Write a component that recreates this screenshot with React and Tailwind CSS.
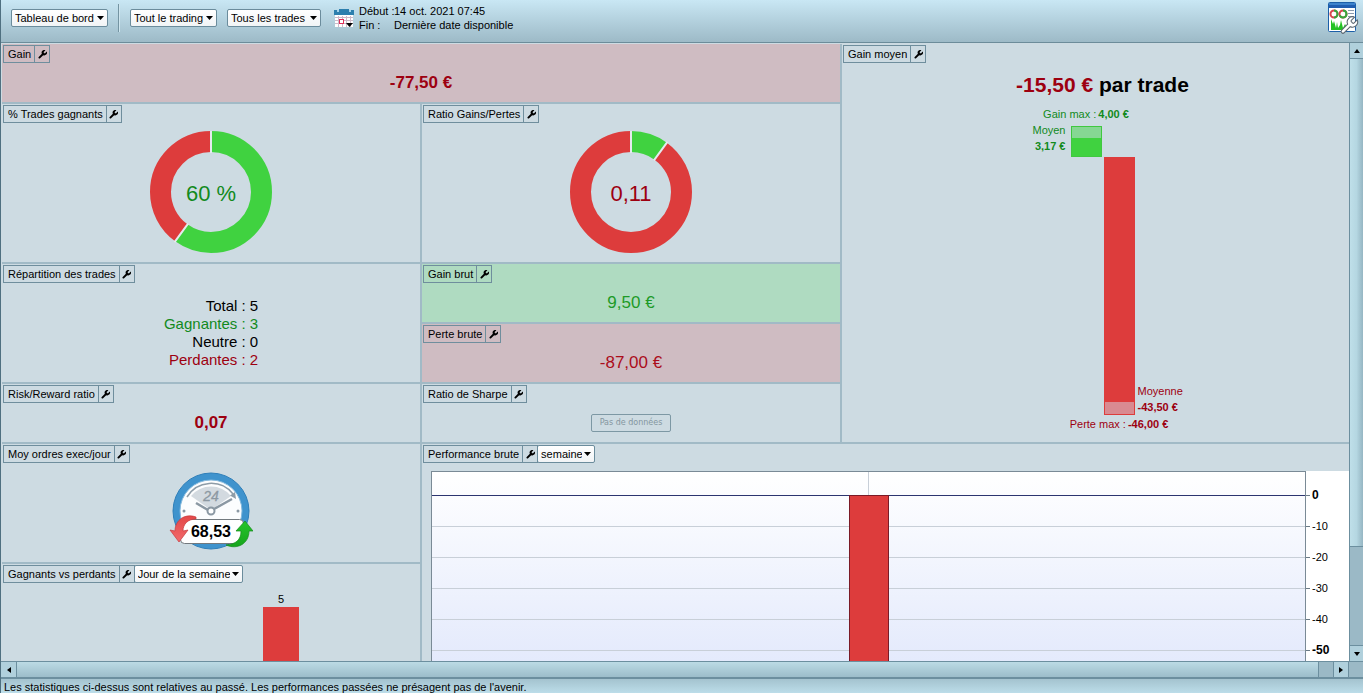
import React from 'react';

const AXIS_TICKS = [-10, -20, -30, -40];

const WRENCH_PATH =
  'M14.7 6.3a1 1 0 0 0 0 1.4l1.6 1.6a1 1 0 0 0 1.4 0l3.77-3.77a6 6 0 0 1-7.94 7.94l-6.91 6.91a2.12 2.12 0 0 1-3-3l6.91-6.91a6 6 0 0 1 7.94-7.94l-3.76 3.76z';

const WrenchIcon = () => (
  <svg width="9" height="9" viewBox="2 2 20 20" aria-hidden="true">
    <path d={WRENCH_PATH} fill="currentColor" />
  </svg>
);

// Select with a small solid caret, used in the toolbar and in the widget headers
const Dropdown = ({ label, options, className = '' }) => (
  <div className={`relative flex h-[18px] ${className}`}>
    <select
      aria-label={label}
      className="h-full w-full appearance-none rounded-xs border border-[#6b8c9c] bg-linear-to-b from-white to-[#f1f4f6] pl-[3px] pr-3 text-[11px] leading-4 text-black"
    >
      {options.map((option) => (
        <option key={option}>{option}</option>
      ))}
    </select>
    <svg
      className="pointer-events-none absolute right-1 top-[7px]"
      width="7"
      height="4"
      viewBox="0 0 7 4"
      aria-hidden="true"
    >
      <path d="M0 0 H7 L3.5 4 Z" fill="#000" />
    </svg>
  </div>
);

const Widget = ({ title, tone = 'bg-[#cddbe2]', border = 'border-b-2 border-r-2', className = '', extra, children }) => (
  <section className={`flex min-h-0 min-w-0 flex-col border-[#a1bac6] ${tone} ${border} ${className}`}>
    <div className="flex pl-px pt-px">
      <h2 className="h-[18px] whitespace-nowrap border border-[#6f8e9d] pl-1 pr-[3px] text-[11px] leading-4">{title}</h2>
      <button
        aria-label={`Configurer ${title}`}
        className="flex h-[18px] w-[15px] items-center justify-center border-y border-r border-[#6f8e9d]"
      >
        <WrenchIcon />
      </button>
      {extra}
    </div>
    {children}
  </section>
);

const Donut = ({ percent, label, className }) => {
  const angle = (percent / 100) * 2 * Math.PI;
  const sin = Math.sin(angle);
  const cos = Math.cos(angle);
  return (
    <svg className="mx-auto mt-2 shrink-0" width="122" height="122" viewBox="0 0 122 122">
      <g fill="none" strokeWidth="21" transform="rotate(-90 61 61)">
        <circle
          cx="61"
          cy="61"
          r="50.5"
          stroke="#dd3c3c"
          pathLength="100"
          strokeDasharray={`${100 - percent} 100`}
          strokeDashoffset={-percent}
        />
        <circle cx="61" cy="61" r="50.5" stroke="#40d240" pathLength="100" strokeDasharray={`${percent} 100`} />
      </g>
      <path
        d={`M61 0 V22 M${61 + sin * 39} ${61 - cos * 39} L${61 + sin * 62} ${61 - cos * 62}`}
        stroke="#e4eaee"
        strokeWidth="2"
      />
      <text x="61" y="70" textAnchor="middle" fontSize="22" className={className}>
        {label}
      </text>
    </svg>
  );
};

const CalendarIcon = () => (
  <svg width="20" height="20" viewBox="0 0 20 20" aria-hidden="true">
    <path d="M0 1 H3 V2 H5 V0 H15 V2 H17 V1 H20 V6 H0 Z" fill="#2c7fae" />
    <path d="M3 1 H5 V3 H3 Z M15 1 H17 V3 H15 Z" fill="#a5d3ea" />
    <rect x="1" y="6" width="18" height="12" fill="#fff" />
    <path
      d="M1 8.5 H19 M1 11.5 H19 M1 14.5 H19 M4.5 7 V18 M8.5 7 V18 M12.5 7 V18 M16.5 7 V18"
      stroke="#cdb9c8"
    />
    <rect x="5.5" y="10.5" width="4" height="4" fill="#fff" stroke="#e0305a" />
    <path d="M12 14 H19 L15.5 18 Z" fill="#000" />
  </svg>
);

const DashboardIcon = () => (
  <svg width="32" height="34" viewBox="0 0 32 34" aria-hidden="true">
    <rect x="0.5" y="0.5" width="27" height="29" rx="1" fill="#fff" stroke="#1c5fa8" />
    <rect x="1" y="1" width="26" height="5" fill="#1f5db0" />
    <rect x="1" y="1" width="26" height="2" fill="#3b82cc" />
    <g fill="none" strokeWidth="2">
      <circle cx="6" cy="12" r="3.5" stroke="#d8454c" />
      <circle cx="15" cy="12" r="3.5" stroke="#d8454c" />
      <path d="M6 8.5 A3.5 3.5 0 0 1 6 15.5" stroke="#35a83c" />
      <path d="M15 8.5 A3.5 3.5 0 1 1 11.8 13.5" stroke="#35a83c" />
    </g>
    <path d="M20 8.5 H26 M20 11.5 H26 M20 14.5 H26" stroke="#8a99ac" />
    <path
      d="M3 28 V17 L5 22 L6 19 L8 26 L9 20 L10 26 L12 23 L13 18 L15 26 L17 22 L20 27 V28 Z"
      fill="#23c223"
    />
    <path d={WRENCH_PATH} transform="translate(10.5 13) scale(0.87)" fill="#fff" stroke="#5a6670" strokeWidth="1.2" />
  </svg>
);

const ClockGauge = ({ value }) => (
  <svg className="mx-auto mt-[9px] shrink-0" width="84" height="78" viewBox="0 0 84 78">
    <defs>
      <linearGradient id="down" x1="0" y1="0" x2="0" y2="1">
        <stop offset="0" stopColor="#e34848" />
        <stop offset="1" stopColor="#f26a6c" />
      </linearGradient>
      <linearGradient id="up" x1="0" y1="0" x2="0" y2="1">
        <stop offset="0" stopColor="#25c52b" />
        <stop offset="1" stopColor="#16a51c" />
      </linearGradient>
    </defs>
    <circle cx="42" cy="39" r="38" fill="#3f93cd" stroke="#2f7fb9" />
    <circle cx="42" cy="39" r="31" fill="#fcfdfe" stroke="#84b8dc" />
    <path d="M22 24 A26 26 0 0 1 62 24 L42 38 Z" fill="#d3dae0" />
    <path d="M18 25 A28 28 0 0 1 64 22" fill="none" stroke="#8e9ca7" strokeWidth="1.5" />
    <path d="M67 27 L61 23.5 L66 20 Z" fill="#8e9ca7" />
    <text x="42" y="29" textAnchor="middle" fontSize="14" fontStyle="italic" fill="#8c98a2" stroke="#8c98a2" strokeWidth="0.3">
      24
    </text>
    <path d="M27 31 L39 38 M45 37 L63 27" stroke="#8b98a3" strokeWidth="2.5" />
    <circle cx="42" cy="39" r="3.5" fill="#fff" stroke="#8b98a3" strokeWidth="2" />
    <circle cx="15" cy="39" r="1.5" fill="#8b98a3" />
    <circle cx="69" cy="39" r="1.5" fill="#8b98a3" />
    <rect x="11.5" y="47.5" width="63" height="24" rx="4" fill="#fff" stroke="#72797e" />
    <path
      d="M27 45 C16 41 6 48 6 59 L1 58 L10 70 L19 58 L14 59 C14 52 19 47 27 47 Z"
      fill="url(#down)"
      stroke="#c73a3e"
      strokeWidth="0.7"
    />
    <path
      d="M57 73 C68 78 80 72 80 59 L84 59 L76 49 L67 59 L72 59 C72 68 67 72 57 73 Z"
      fill="url(#up)"
      stroke="#128b18"
      strokeWidth="0.7"
    />
    <text x="42" y="65" textAnchor="middle" fontSize="16" fontWeight="bold" fill="#000">
      {value}
    </text>
  </svg>
);

const ScrollButton = ({ label, path, className }) => (
  <button
    aria-label={label}
    className={`flex shrink-0 items-center justify-center border-[#6c8f9f] bg-[#b0d0dc] ${className}`}
  >
    <svg width="6" height="6" viewBox="0 0 6 6" aria-hidden="true">
      <path d={path} fill="#000" />
    </svg>
  </button>
);

const Toolbar = () => (
  <header className="flex h-[43px] shrink-0 items-start border-b border-[#6c8c9a] bg-linear-to-b from-[#c9e7f4] to-[#9dbac7]">
    <div className="flex pl-2.5 pt-[9px]">
      <Dropdown label="Vue" options={['Tableau de bord']} className="w-[97px]" />
    </div>
    <div className="ml-2.5 mt-1 h-7 w-0.5 border-l border-r border-l-[#7494a2] border-r-[#cfe6ef]" />
    <div className="flex gap-2.5 pl-2.5 pt-[9px]">
      <Dropdown label="Type de trading" options={['Tout le trading']} className="w-[87px]" />
      <Dropdown label="Trades affichés" options={['Tous les trades']} className="w-[94px]" />
    </div>
    <button aria-label="Choisir la période" className="ml-[13px] mt-[9px]">
      <CalendarIcon />
    </button>
    <dl className="ml-[5px] mt-1 grid grid-cols-[35px_auto] leading-[14px]">
      <dt className="whitespace-nowrap">Début :</dt>
      <dd>14 oct. 2021 07:45</dd>
      <dt>Fin :</dt>
      <dd>Dernière date disponible</dd>
    </dl>
    <button aria-label="Configurer le tableau de bord" className="ml-auto mr-[3px] mt-0.5">
      <DashboardIcon />
    </button>
  </header>
);

const AverageGain = () => (
  <Widget title="Gain moyen" border="border-b-2" className="col-start-3 row-span-5 row-start-1">
    <div className="flex flex-col items-center pl-3.5 pt-[10px]">
      <p className="text-[21px] font-bold leading-6">
        <span className="text-[#9d0010]">-15,50 €</span> par trade
      </p>
      <div className="mt-[9px] grid grid-cols-[70px_31px_31px_70px] gap-x-0.5 whitespace-nowrap leading-4">
        <p className="col-start-2 flex justify-center gap-0.5 text-[#128a1c]">
          Gain max : <b>4,00 €</b>
        </p>
        <p className="col-start-1 row-start-2 pr-[3px] text-right text-[#128a1c]">
          Moyen
          <br />
          <b>3,17 €</b>
        </p>
        <div className="row-start-2 mt-1 flex h-[31px] flex-col border border-[#40c840] bg-[#86d793]">
          <div className="mt-auto h-[18px] bg-[#40d240]" />
        </div>
        <div className="col-start-3 row-start-3 flex h-[258px] flex-col border border-[#dd3c3c] bg-[#d98a91]">
          <div className="h-[244px] bg-[#dd3c3c]" />
        </div>
        <p className="col-start-4 row-start-3 self-end pl-px text-[#9d0010]">
          Moyenne
          <br />
          <b>-43,50 €</b>
        </p>
        <p className="col-start-3 row-start-4 mt-px flex justify-center gap-0.5 text-[#9d0010]">
          Perte max : <b>-46,00 €</b>
        </p>
      </div>
    </div>
  </Widget>
);

const PerformanceChart = () => (
  <div className="mt-2 flex min-h-0 flex-1 overflow-hidden pl-[9px]">
    <div className="relative flex-1 overflow-hidden border border-b-0 border-[#7a8a96] bg-linear-to-b from-white to-[#e4eafc]">
      <div className="mx-auto h-[23px] w-px bg-[#c8cfd8]" />
      <div className="h-px bg-[#2c3570]" />
      {AXIS_TICKS.map((tick) => (
        <div key={tick} className="h-[31px] border-b border-[#c8cfd8]" />
      ))}
      <div className="h-[31px] border-b border-[#c8cfd8]" />
      <div className="absolute bottom-0 left-1/2 top-[23px] w-10 -translate-x-1/2 border border-b-0 border-[#7a1a26] bg-[#dd3c3c]" />
    </div>
    <ul className="w-[43px] bg-white pt-[9px] text-[12px] leading-[31px]">
      <li className="flex items-center gap-0.5 font-bold before:h-px before:w-1 before:bg-[#6a7a86]">0</li>
      {AXIS_TICKS.map((tick) => (
        <li key={tick} className="flex items-center gap-0.5 text-[11px] before:h-px before:w-1 before:bg-[#6a7a86]">
          {tick}
        </li>
      ))}
      <li className="flex h-[31px] items-center gap-0.5 font-bold before:h-px before:w-1 before:bg-[#6a7a86]">-50</li>
    </ul>
  </div>
);

function App() {
  return (
    <div className="flex h-screen flex-col overflow-hidden border-l border-[#4f7080] bg-[#cddbe2] font-['Liberation_Sans',Arial,sans-serif] text-[11px] text-black">
      <Toolbar />
      <div className="flex min-h-0 flex-1">
        <main className="grid min-w-0 flex-1 grid-cols-[420fr_420fr_507fr] grid-rows-[60px_160px_60px_60px_60px_120px_minmax(0,1fr)] overflow-hidden pl-px pt-px">
          <Widget title="Gain" tone="bg-[#cfbcc2]" className="col-span-2">
            <p className="text-center text-[17px] font-bold leading-10 text-[#9d0010]">-77,50 €</p>
          </Widget>
          <AverageGain />
          <Widget title="% Trades gagnants">
            <Donut percent={60} label="60 %" className="fill-[#128a1c]" />
          </Widget>
          <Widget title="Ratio Gains/Pertes">
            <Donut percent={10} label="0,11" className="fill-[#9d0010]" />
          </Widget>
          <Widget title="Répartition des trades" className="row-span-2">
            <dl className="mx-auto mt-3.5 grid grid-cols-[auto_auto] gap-x-1 text-right text-[15px] leading-[18px]">
              <dt>Total :</dt>
              <dd>5</dd>
              <dt className="text-[#128a1c]">Gagnantes :</dt>
              <dd className="text-[#128a1c]">3</dd>
              <dt>Neutre :</dt>
              <dd>0</dd>
              <dt className="text-[#9d0010]">Perdantes :</dt>
              <dd className="text-[#9d0010]">2</dd>
            </dl>
          </Widget>
          <Widget title="Gain brut" tone="bg-[#afdbc1]">
            <p className="text-center text-[17px] leading-10 text-[#1d9a26]">9,50 €</p>
          </Widget>
          <Widget title="Perte brute" tone="bg-[#cfbcc2]">
            <p className="text-center text-[17px] leading-10 text-[#ab0d1b]">-87,00 €</p>
          </Widget>
          <Widget title="Risk/Reward ratio">
            <p className="text-center text-[17px] font-bold leading-10 text-[#9d0010]">0,07</p>
          </Widget>
          <Widget title="Ratio de Sharpe">
            <p className="mx-auto mt-[11px] h-[18px] rounded-xs border border-[#7d98a4] px-2 font-['DejaVu_Sans',sans-serif] text-[8px] leading-4 text-[#8496a0]">
              Pas de données
            </p>
          </Widget>
          <Widget title="Moy ordres exec/jour">
            <ClockGauge value="68,53" />
          </Widget>
          <Widget
            title="Performance brute"
            border="border-0"
            className="col-span-2 row-span-2"
            extra={<Dropdown label="Période" options={['semaine']} className="-ml-px w-[58px]" />}
          >
            <PerformanceChart />
          </Widget>
          <Widget
            title="Gagnants vs perdants"
            border="border-r-2"
            extra={<Dropdown label="Regroupement" options={['Jour de la semaine']} className="-ml-px w-[109px]" />}
          >
            <div className="mt-2 flex flex-1">
              <div className="grow-261" />
              <div className="flex w-9 flex-col text-center leading-4">
                5
                <div className="flex-1 bg-[#dd3c3c]" />
              </div>
              <div className="grow-121" />
            </div>
          </Widget>
        </main>
        <div className="flex w-3.5 shrink-0 flex-col border-l border-[#6c8f9f] bg-[#9bb9c6]">
          <ScrollButton label="Défiler vers le haut" path="M0 5 H6 L3 1 Z" className="h-4 border-b" />
          <div className="flex-[488] border-b border-[#6c8f9f] bg-linear-to-r from-[#bfdfe9] via-[#b5d7e2] to-[#96b6c3]" />
          <div className="flex-[98]" />
          <ScrollButton label="Défiler vers le bas" path="M0 1 H6 L3 5 Z" className="h-4 border-t" />
        </div>
      </div>
      <div className="flex h-4 shrink-0 border-t border-[#6c8f9f] bg-[#9bb9c6]">
        <ScrollButton label="Défiler vers la gauche" path="M5 0 V6 L1 3 Z" className="w-4 border-r" />
        <div className="flex-1 border-r border-[#6c8f9f] bg-linear-to-b from-[#bcdbe5] to-[#9cbdca]" />
        <div className="w-3.5" />
        <ScrollButton label="Défiler vers la droite" path="M1 0 V6 L5 3 Z" className="w-4 border-x" />
        <div className="w-3.5" />
      </div>
      <footer className="h-4 shrink-0 border-t-2 border-[#6c8f9f] bg-linear-to-b from-[#a4c3cf] to-[#bcdde9] pl-[3px] leading-4">
        <p>Les statistiques ci-dessus sont relatives au passé. Les performances passées ne présagent pas de l'avenir.</p>
      </footer>
    </div>
  );
}

export default App;
